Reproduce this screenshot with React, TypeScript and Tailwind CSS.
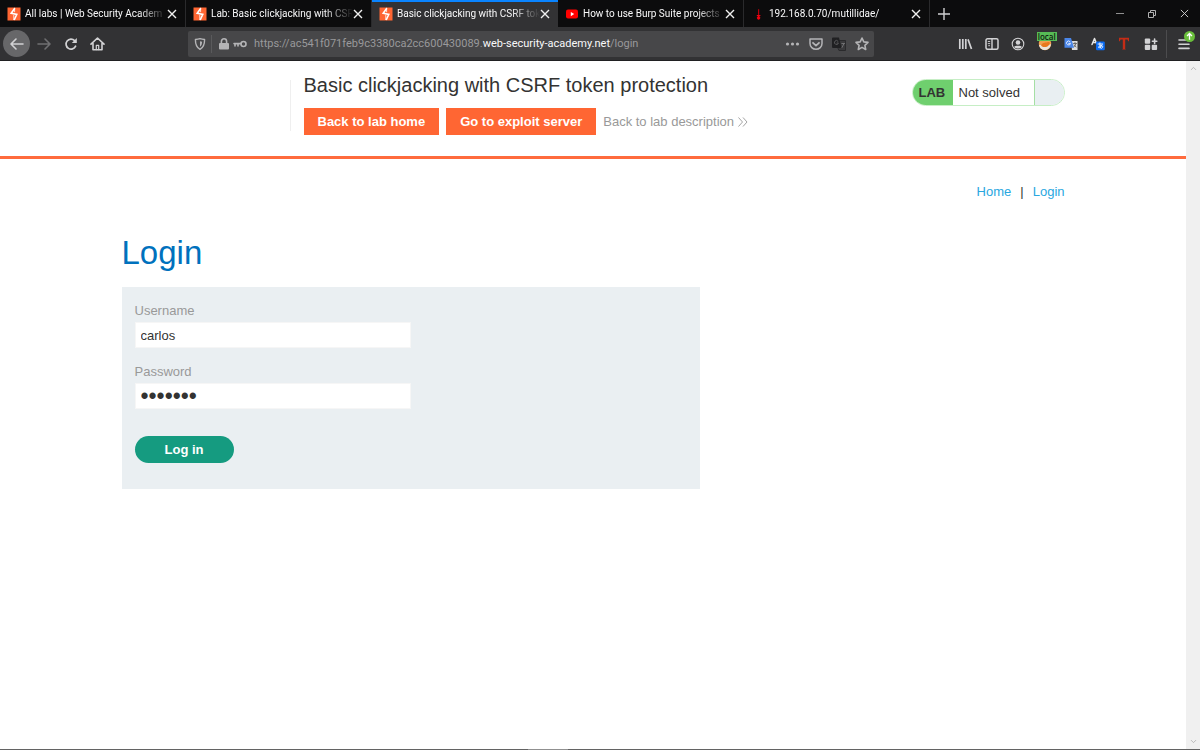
import { useState, type ReactNode } from "react";
import { LuChevronUp, LuChevronDown } from "react-icons/lu";

interface Tab {
	id: number;
	title: string;
	icon: "burp" | "youtube" | "dagger";
	active?: boolean;
}

const TABS: Tab[] = [
	{ id: 1, title: "All labs | Web Security Academ", icon: "burp" },
	{ id: 2, title: "Lab: Basic clickjacking with CSR", icon: "burp" },
	{ id: 3, title: "Basic clickjacking with CSRF tok", icon: "burp", active: true },
	{ id: 4, title: "How to use Burp Suite projects", icon: "youtube" },
	{ id: 5, title: "192.168.0.70/mutillidae/", icon: "dagger" },
];

const BurpIcon = () => (
	<svg className="h-[14px] w-[14px]" viewBox="0 0 14 14">
		<rect x=".5" y=".5" width="13" height="13" fill="#ff6633" />
		<path d="M7.8 1.2 4.2 6.2 9.8 7.4 7.2 13" stroke="#fff" strokeWidth="1.6" fill="none" />
		<path d="M7.6.8v4.4M6.8 8v5" stroke="#fff" strokeWidth=".8" />
	</svg>
);

const YoutubeIcon = () => (
	<svg className="h-[14px] w-[14px]" viewBox="0 0 14 14">
		<rect x="1" y="2.6" width="12" height="9" rx="2" fill="#f00" />
		<path d="M5.8 5v4.2L9.2 7.1z" fill="#fff" />
	</svg>
);

const DaggerIcon = () => (
	<svg className="h-[14px] w-[14px]" viewBox="0 0 14 14">
		<path d="M7 2.2h1.2V8H7z" fill="#b3000b" />
		<path d="M5.8 8h3.6v1H8.5v.4a1.7 1.7 0 1 1-1.8 0V9h-.9z" fill="#f0000f" />
	</svg>
);

const CloseIcon = ({ className }: { className: string }) => (
	<svg className={className} viewBox="0 0 10 10" stroke="currentColor" fill="none">
		<path d="M1 1l8 8M9 1 1 9" />
	</svg>
);

const TabIcon = ({ icon }: { icon: Tab["icon"] }) => {
	if (icon === "youtube") return <YoutubeIcon />;
	if (icon === "dagger") return <DaggerIcon />;
	return <BurpIcon />;
};

const TabBar = () => (
	<div className="flex h-[27px] bg-[#0c0c0d]">
		<div className="flex min-w-0 flex-1">
			{TABS.map((tab) => (
				<div
					key={tab.id}
					className={
						tab.active
							? "flex min-w-0 max-w-[186px] flex-1 items-center border-t-2 border-[#0a84ff] bg-[#323234] pl-[7px] pr-2 pb-[2px]"
							: "flex min-w-0 max-w-[186px] flex-1 items-center border-r border-[#2a2a2c] pl-[7px] pr-2"
					}
				>
					<span className="shrink-0">
						<TabIcon icon={tab.icon} />
					</span>
					<span className="ml-1 min-w-0 flex-1 overflow-hidden whitespace-nowrap text-[10px] leading-4 text-[#f9f9fa] [mask-image:linear-gradient(to_right,#000_80%,transparent)]">
						{tab.title}
					</span>
					<button aria-label="Close tab" className="shrink-0 text-[#f0f0f0]">
						<CloseIcon className="h-[10px] w-[10px] stroke-[1.4]" />
					</button>
				</div>
			))}
			<button aria-label="New tab" className="flex w-7 shrink-0 items-center justify-center text-[#d0d0d2]">
				<svg className="h-3 w-3" viewBox="0 0 12 12" stroke="currentColor" strokeWidth="1.4">
					<path d="M6 0v12M0 6h12" />
				</svg>
			</button>
		</div>
		<div className="flex shrink-0 text-[#d8d8d8]">
			<button aria-label="Minimize" className="flex w-8 items-center justify-center">
				<svg className="h-2 w-2" viewBox="0 0 8 8" stroke="#909090">
					<path d="M0 3.5h8" />
				</svg>
			</button>
			<button aria-label="Restore" className="flex w-8 items-center justify-center">
				<svg className="h-2 w-2" viewBox="0 0 8 8" stroke="#b0b0b0" fill="none">
					<path d="M.5 2.5h5v5h-5zM2.5 2.5v-2h5v5h-2" />
				</svg>
			</button>
			<button aria-label="Close" className="flex w-8 items-center justify-center">
				<CloseIcon className="h-[9px] w-[9px] stroke-1" />
			</button>
		</div>
	</div>
);

const ToolIcon = ({ label, children }: { label: string; children: ReactNode }) => (
	<button aria-label={label} className="shrink-0">
		<svg
			className="h-4 w-4"
			viewBox="0 0 16 16"
			fill="none"
			stroke="currentColor"
			strokeWidth="1.6"
			strokeLinecap="round"
			strokeLinejoin="round"
		>
			{children}
		</svg>
	</button>
);

const NavButtons = () => (
	<div className="flex text-[#d2d2d4]">
		<div className="flex h-[27px] w-[27px] items-center justify-center rounded-full bg-[#676769]">
			<ToolIcon label="Back">
				<path d="M14 8H2.5M7 3 2 8l5 5" />
			</ToolIcon>
		</div>
		<div className="flex h-[27px] w-[27px] items-center justify-center text-[#707072]">
			<ToolIcon label="Forward">
				<path d="M2 8h11.5M9 3l5 5-5 5" />
			</ToolIcon>
		</div>
		<div className="flex h-[27px] w-[27px] items-center justify-center">
			<ToolIcon label="Reload">
				<path d="M12.6 10.2A5 5 0 1 1 11.6 4.6" strokeWidth="1.7" />
				<path d="M13.8 2v5H8.8z" fill="currentColor" stroke="none" />
			</ToolIcon>
		</div>
		<div className="flex h-[27px] w-[27px] items-center justify-center">
			<ToolIcon label="Home">
				<path d="M1 8.2 7.5 2 14 8.2M3 7.4v6.4h9V7.4" />
				<path d="M6.3 13.6V9.4h2.4v4.2" strokeWidth="1.2" />
			</ToolIcon>
		</div>
	</div>
);

const UrlBar = () => (
	<div className="ml-[77px] flex h-[26px] min-w-0 flex-1 items-center rounded-[2px] bg-[#474749] px-1 text-[#b4b4b6]">
		<ToolIcon label="Tracking protection">
			<path
				d="M8 2.6c1.6.6 3 .8 4.6.9 0 4.6-.8 8-4.6 9.9-3.8-1.9-4.6-5.3-4.6-9.9C5 3.4 6.4 3.2 8 2.6z"
				strokeWidth="1.4"
			/>
			<path d="M8 5.2v5.6c1.5-1.2 2-2.8 2.1-5.1z" fill="currentColor" stroke="none" />
		</ToolIcon>
		<span className="ml-[3px] mr-1 h-[18px] w-px bg-[#5a5a5c]" />
		<ToolIcon label="Connection secure">
			<rect x="3" y="7" width="10" height="6.6" rx="1" fill="currentColor" stroke="none" />
			<path d="M5.4 7.5V5.4a2.6 2.6 0 0 1 5.2 0v2.1" />
		</ToolIcon>
		<ToolIcon label="Saved login">
			<circle cx="11.5" cy="8" r="2.5" />
			<path d="M9 7.6H2M3 8v2M6 8v2" />
		</ToolIcon>
		<span className="ml-[6px] min-w-0 flex-1 overflow-hidden whitespace-nowrap text-[11px] leading-4 text-[#99999b]">
			https://ac541f071feb9c3380ca2cc600430089.
			<span className="text-[#f9f9fa]">web-security-academy.net</span>
			/login
		</span>
		<div className="flex shrink-0 gap-[7px]">
			<ToolIcon label="Page actions">
				<g fill="currentColor" stroke="none">
					<circle cx="2.5" cy="8" r="1.6" />
					<circle cx="7.5" cy="8" r="1.6" />
					<circle cx="12.5" cy="8" r="1.6" />
				</g>
			</ToolIcon>
			<ToolIcon label="Save to Pocket">
				<path d="M2 3h12v4.5a6 5.8 0 0 1-12 0z" strokeWidth="1.5" />
				<path d="M5 6.8 8 9.6l3-2.8" strokeWidth="1.8" />
			</ToolIcon>
			<ToolIcon label="Translate page">
				<path d="M8.5 4.5h6v10H8l-1-2" fill="#3a3a3c" stroke="#2a2a2c" strokeWidth="1" />
				<path
					d="M2 1.5h6L10.500 12H2a1 1 0 0 1-1-1V2.500a1 1 0 0 1 1-1z"
					fill="#202022"
					stroke="none"
				/>
				<path d="M7 5.2A2 2 0 1 0 7.4 7H6" stroke="#58585a" strokeWidth="1" />
				<path d="M10.8 7.5h2.8M11 11.5l2-4" stroke="#707072" strokeWidth="1" />
			</ToolIcon>
			<ToolIcon label="Bookmark">
				<path
					d="m8 2 1.8 3.9 4.2.5-3.1 2.9.8 4.2L8 11.4l-3.7 2.1.8-4.2L2 6.4l4.2-.5z"
					strokeWidth="1.6"
				/>
			</ToolIcon>
		</div>
	</div>
);

const Extensions = () => (
	<div className="ml-[83px] flex w-[202px] shrink-0 items-center justify-between text-[#d2d2d4]">
		<ToolIcon label="Library">
			<path d="M2.8 3v10M5.8 3v10M8.8 3v10M11 3.4 14.5 13" strokeWidth="1.7" strokeLinecap="butt" />
		</ToolIcon>
		<ToolIcon label="Sidebars">
			<rect x="2" y="2.8" width="12" height="10.4" rx="1.5" strokeWidth="1.5" />
			<path d="M8 3v10" strokeWidth="1.4" />
			<path d="M4.2 5.5h1.6M4.2 7.6h1.6M4.6 9.7h1" strokeWidth=".9" />
		</ToolIcon>
		<ToolIcon label="Account">
			<circle cx="8" cy="8" r="5.8" strokeWidth="1.1" />
			<circle cx="8" cy="6.5" r="2.3" fill="currentColor" stroke="none" />
			<path d="M4 11c.8-1.6 7.2-1.6 8 0A5 5 0 0 1 8 12.6 5 5 0 0 1 4 11z" fill="currentColor" stroke="none" />
		</ToolIcon>
		<div className="relative flex">
			<ToolIcon label="Cookies">
				<circle cx="8" cy="8" r="6.2" fill="#f0a050" stroke="none" />
				<path d="M2 9c2 .5 3-1 5-1s3 2 7 0c-.5 3.5-3 6-6 6S2.5 12 2 9z" fill="#e9e4dc" stroke="none" />
				<path d="M4 9c2-3 5-2 7-3 1.5 0 2.5.5 1.5 2-1 2.5-3 3-5 3S4.5 10.5 4 9z" fill="#e8781e" stroke="none" />
			</ToolIcon>
			<span className="absolute -top-[4px] left-0 bg-[#57bb56] px-px font-['Open_Sans',sans-serif] text-[8px] font-semibold leading-[9px] text-[#102010]">
				local
			</span>
		</div>
		<ToolIcon label="Google Translate">
			<path d="M8 5h6.5v9H9z" fill="#dcdcdc" stroke="none" />
			<path d="M10.5 7.5h3M12 6.5v1M10.8 11l2-3M11.5 9l1.5 2" stroke="#606060" strokeWidth=".9" />
			<path d="M1.5 2H8l3 9.8H1.500z" fill="#4a86e8" stroke="none" />
			<path d="M7 5.6A2 2 0 1 0 7.5 7.4H5.7" stroke="#e0eaff" strokeWidth="1" />
		</ToolIcon>
		<ToolIcon label="Translator">
			<path d="m2 8.5 2.5-6 2.5 6M3 6.5h3" stroke="#e4e4e4" strokeWidth="1.5" />
			<rect x="6" y="5.5" width="8.8" height="8.8" rx="1.2" fill="#0a6cf5" stroke="none" />
			<path
				d="M8 8h4.6M9.9 6.9c0 2 0 3.6.6 5.1M12 8.900c-.8 2.200-2 3-3.200 2.800-1-.4.5-2.200 2.400-2.100 2.200.2 1.800 2.300.3 2.700"
				stroke="#fff"
				strokeWidth=".9"
			/>
		</ToolIcon>
		<ToolIcon label="Text tool">
			<path
				d="M3 1.8h10v3.4h-.8l-.8-1.8H9.200V13l1 .6H5.800l1-.6V3.400H4.600l-.8 1.800H3z"
				fill="#c42c16"
				stroke="none"
			/>
		</ToolIcon>
		<ToolIcon label="Add-ons">
			<g fill="currentColor" stroke="none">
				<rect x="1.8" y="2.5" width="5.4" height="5.2" rx="1" />
				<rect x="1.8" y="8.8" width="5.4" height="5.2" rx="1" />
				<rect x="8.7" y="8.8" width="5.4" height="5.2" rx="1" />
			</g>
			<path d="M11.6 3v4.4M9.4 5.2h4.4" />
		</ToolIcon>
	</div>
);

const Toolbar = () => (
	<div className="flex h-[34px] items-center border-b border-[#202022] bg-[#323234] pl-[3px] pr-2">
		<NavButtons />
		<UrlBar />
		<Extensions />
		<span className="ml-[7px] h-7 w-px bg-[#4c4c4e]" />
		<div className="relative ml-[9px] flex text-[#d2d2d4]">
			<ToolIcon label="Menu">
				<path d="M3 4h10M3 8.2h10M3 12.4h10" />
			</ToolIcon>
			<svg className="absolute -top-[5px] left-2 h-[11px] w-[11px]" viewBox="0 0 10 10">
				<circle cx="5" cy="5" r="5" fill="#6abf3b" />
				<path d="M5 8V2.5M2.8 4.6 5 2.3l2.2 2.3" stroke="#fff" strokeWidth="1.2" fill="none" />
			</svg>
		</div>
	</div>
);

const LabHeader = () => (
	<header className="border-b-[3px] border-[#ff6b3d]">
		<div className="mx-auto flex max-w-[943px] items-start pb-[21px] pt-3">
			<div className="mr-[13px] mt-[7px] h-[51px] w-[169px] shrink border-r border-[#efefef]" />
			<div className="flex-1">
				<h2 className="text-[20px] leading-6 text-[#333332]">
					Basic clickjacking with CSRF token protection
				</h2>
				<div className="mt-[11px] flex flex-wrap items-center gap-[7px] text-[13px] leading-[27px]">
					<a href="#home" className="bg-[#ff6633] px-[14px] font-bold text-white">
						Back to lab home
					</a>
					<a href="#exploit" className="bg-[#ff6633] px-[14px] font-bold text-white">
						Go to exploit server
					</a>
					<a href="#description" className="flex items-center gap-1 text-[#999]">
						Back to lab description
						<svg className="h-[10px] w-[10px]" viewBox="0 0 10 10" fill="none" stroke="#999" strokeWidth=".9">
							<path d="m.5.5 4 4.5-4 4.5M5 .5 9 5 5 9.500" />
						</svg>
					</a>
				</div>
			</div>
			<div className="mt-[6px] flex h-[27px] w-[153px] shrink-0 overflow-hidden rounded-full border border-[#c6eec5] text-[13px] leading-[25px] text-[#333332]">
				<span className="w-10 bg-[#6fcf6e] pl-[6px] font-bold">LAB</span>
				<span className="flex-1 pl-[6px]">Not solved</span>
				<span className="w-[30px] border-l border-[#a5dfa4] bg-[#e9eff2]" />
			</div>
		</div>
	</header>
);

const LoginForm = () => {
	const [username, setUsername] = useState("carlos");
	const [password, setPassword] = useState("montoya");

	return (
		<form
			className="flex max-w-[578px] flex-col items-start bg-[#eaeff2] px-[13px] pb-[26px] pt-[13px] text-[13px]"
			onSubmit={(e) => e.preventDefault()}
		>
			<label htmlFor="username" className="leading-[22px] text-[#999]">
				Username
			</label>
			<input
				id="username"
				type="text"
				value={username}
				onChange={(e) => setUsername(e.target.value)}
				className="h-[26px] w-full max-w-[276px] border border-[#f6f6f6] bg-white px-[5px] text-[#333332]"
			/>
			<label htmlFor="password" className="mt-[13px] leading-[22px] text-[#999]">
				Password
			</label>
			<input
				id="password"
				type="password"
				value={password}
				onChange={(e) => setPassword(e.target.value)}
				className="h-[26px] w-full max-w-[276px] border border-[#f6f6f6] bg-white px-[5px] text-[23px] leading-6 text-[#333332]"
			/>
			<button type="submit" className="mt-[27px] h-[27px] w-[99px] rounded-full bg-[#159b80] font-bold text-white">
				Log in
			</button>
		</form>
	);
};

const App = () => {
	return (
		<div className="flex min-h-screen flex-col bg-white font-[Roboto,'Open_Sans',sans-serif]">
			<TabBar />
			<Toolbar />
			<div className="flex flex-1">
				<div className="min-w-0 flex-1 font-['Liberation_Sans',Arial,sans-serif]">
					<LabHeader />
					<main className="mx-auto max-w-[943px]">
						<nav className="flex justify-end gap-[9px] pt-[25px] text-[13px] leading-4 text-[#29a7df]">
							<a href="#home">Home</a>
							<span className="text-[#333332]">|</span>
							<a href="#login">Login</a>
						</nav>
						<h1 className="mb-[14px] mt-[33px] text-[33px] leading-10 text-[#0071bd]">Login</h1>
						<LoginForm />
					</main>
				</div>
				<div className="flex w-[14px] flex-col items-center justify-between bg-[#f0f0f0] py-[3px] text-[#a8a8a8]">
					<LuChevronUp className="h-[9px] w-[9px]" />
					<LuChevronDown className="h-[9px] w-[9px]" />
				</div>
			</div>
			<div className="h-px bg-[#636363] pl-[44%]">
				<div className="h-px w-10 bg-[#909090]" />
			</div>
		</div>
	);
};

export default App;
